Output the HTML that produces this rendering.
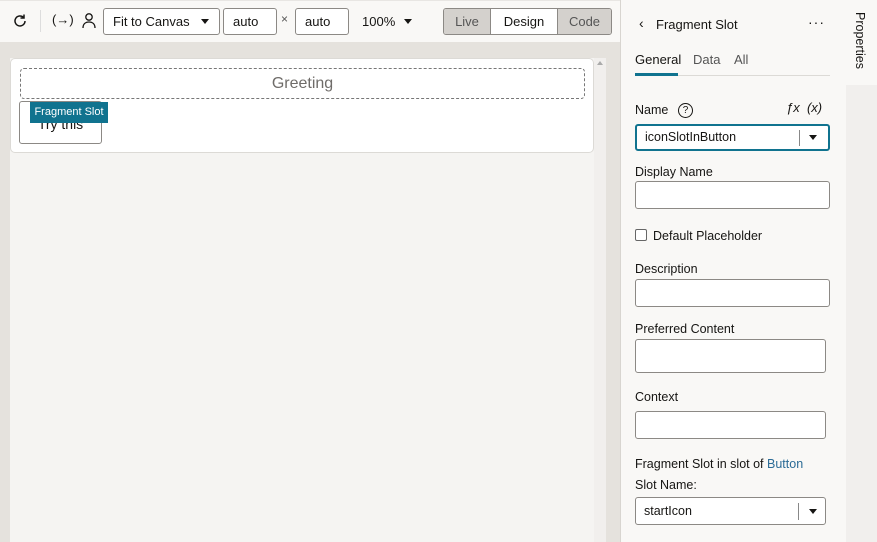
<!DOCTYPE html>
<html><head><style>
*{box-sizing:border-box;margin:0;padding:0}
body{width:877px;height:542px;overflow:hidden;font-family:"Liberation Sans",sans-serif;font-size:13px;color:#161513;background:#e5e2dd;position:relative}
.abs{position:absolute}
.tb{left:0;top:0;width:620px;height:42px;background:#f9f8f6;border-top:1px solid #e8e6e3}
.box{position:absolute;border:1px solid #8c8985;border-radius:3px;background:#fff;height:27px;top:8px;font-size:13px;line-height:25px;padding-left:9px}
.panel{left:620px;top:0;width:226px;height:542px;background:#f9f8f6;border-left:1px solid #d8d5d0}
.strip{left:846px;top:0;width:31px;height:542px;background:#f1efed}
.lbl{position:absolute;left:635px;font-size:12.5px;color:#161513}
.inp{position:absolute;left:635px;width:195px;background:#fff;border:1px solid #8c8985;border-radius:3px}
.caret{width:0;height:0;border-left:4px solid transparent;border-right:4px solid transparent;border-top:5px solid #161513;position:absolute}
</style></head><body>
<div class="abs tb"></div>
<svg class="abs" style="left:12px;top:13px" width="16" height="16" viewBox="0 0 16 16" fill="none" stroke="#161513" stroke-width="1.5"><path d="M13 8a5 5 0 1 1-1.5-3.6"/><path d="M12 1.5v3.5H8.5"/></svg>
<div class="abs" style="left:40px;top:10px;width:1px;height:22px;background:#ddd"></div>
<div class="abs" style="left:52px;top:12px;font-size:13px">(→)</div>
<svg class="abs" style="left:81px;top:12px" width="16" height="17" viewBox="0 0 16 17" fill="none" stroke="#161513" stroke-width="1.3"><circle cx="8" cy="5" r="3.2"/><path d="M2 16c0-4 2.5-6 6-6s6 2 6 6"/></svg>
<div class="box" style="left:103px;width:117px">Fit to Canvas<span class="caret" style="left:97px;top:10px"></span></div>
<div class="box" style="left:223px;width:54px">auto</div>
<div class="abs" style="left:281px;top:12px;font-size:12px;color:#555">×</div>
<div class="box" style="left:295px;width:54px">auto</div>
<div class="abs" style="left:362px;top:14px">100%</div>
<span class="caret" style="left:404px;top:19px"></span>
<div class="abs" style="left:443px;top:8px;width:169px;height:27px;border:1px solid #8c8985;border-radius:3px;overflow:hidden;display:flex;font-size:13px;line-height:25px;text-align:center">
<div style="width:47px;background:#d4d1cd;color:#555;border-right:1px solid #8c8985">Live</div>
<div style="width:67px;background:#fff;border-right:1px solid #8c8985">Design</div>
<div style="flex:1;background:#d4d1cd;color:#555">Code</div></div>

<div class="abs" style="left:10px;top:58px;width:584px;height:484px;background:#f5f4f2"></div>
<div class="abs" style="left:10px;top:58px;width:584px;height:95px;background:#fff;border:1px solid #dcdad6;border-radius:5px"></div>
<div class="abs" style="left:594px;top:58px;width:12px;height:484px;background:#f1efed"></div>
<div class="abs" style="left:597px;top:61px;width:0;height:0;border-left:3px solid transparent;border-right:3px solid transparent;border-bottom:4px solid #aaa"></div>
<div class="abs" style="left:20px;top:68px;width:565px;height:31px;border:1px dashed #777;border-radius:4px;text-align:center;line-height:29px;font-size:16px;color:#6f6c69">Greeting</div>
<div class="abs" style="left:19px;top:101px;width:83px;height:43px;border:1px solid #8c8985;border-radius:3px;background:#fff;text-align:center;padding-top:14px;font-size:14px">Try this</div>
<div class="abs" style="left:30px;top:102px;width:78px;height:21px;background:#10738f;color:#fff;font-size:11px;line-height:21px;text-align:center">Fragment Slot</div>

<div class="abs panel"></div>
<div class="abs strip"><div style="height:85px;background:#f9f8f6"></div></div>
<div class="abs" style="left:853px;top:12px;writing-mode:vertical-rl;font-size:12.5px">Properties</div>
<div class="abs" style="left:639px;top:15px;font-size:14px">‹</div>
<div class="abs" style="left:656px;top:17px;font-size:13px">Fragment Slot</div>
<div class="abs" style="left:808px;top:14px;font-size:14px;letter-spacing:1px">···</div>
<div class="abs" style="left:635px;top:52px;font-size:13px">General</div>
<div class="abs" style="left:693px;top:52px;font-size:13px;color:#555">Data</div>
<div class="abs" style="left:734px;top:52px;font-size:13px;color:#555">All</div>
<div class="abs" style="left:635px;top:75px;width:195px;height:1px;background:#dcdad6"></div>
<div class="abs" style="left:635px;top:73px;width:43px;height:3px;background:#10738f"></div>
<div class="lbl" style="top:103px">Name</div>
<div class="abs" style="left:678px;top:103px;width:15px;height:15px;border:1.3px solid #161513;border-radius:50%;font-size:10px;text-align:center;line-height:13px">?</div>
<div class="abs" style="left:786px;top:100px;font-style:italic;font-size:13px">ƒx &nbsp;(x)</div>
<div class="inp" style="top:124px;height:27px;border:2px solid #10738f;font-size:12.5px;line-height:23px;padding-left:8px">iconSlotInButton<div class="abs" style="left:162px;top:4px;width:1px;height:16px;background:#888"></div><span class="caret" style="left:172px;top:9px"></span></div>
<div class="lbl" style="top:165px">Display Name</div>
<div class="inp" style="top:181px;height:28px"></div>
<div class="abs" style="left:635px;top:229px;width:12px;height:12px;border:1.3px solid #666;border-radius:2px;background:#fff"></div>
<div class="lbl" style="left:653px;top:229px">Default Placeholder</div>
<div class="lbl" style="top:262px">Description</div>
<div class="inp" style="top:279px;height:28px"></div>
<div class="lbl" style="top:322px">Preferred Content</div>
<div class="inp" style="top:339px;height:34px;width:191px"></div>
<div class="lbl" style="top:390px">Context</div>
<div class="inp" style="top:411px;height:28px;width:191px"></div>
<div class="lbl" style="top:457px">Fragment Slot in slot of <span style="color:#2b6b96">Button</span></div>
<div class="lbl" style="top:478px">Slot Name:</div>
<div class="inp" style="top:497px;height:28px;width:191px;font-size:12.5px;line-height:26px;padding-left:8px">startIcon<div class="abs" style="left:162px;top:5px;width:1px;height:17px;background:#888"></div><span class="caret" style="left:173px;top:11px"></span></div>
</body></html>
